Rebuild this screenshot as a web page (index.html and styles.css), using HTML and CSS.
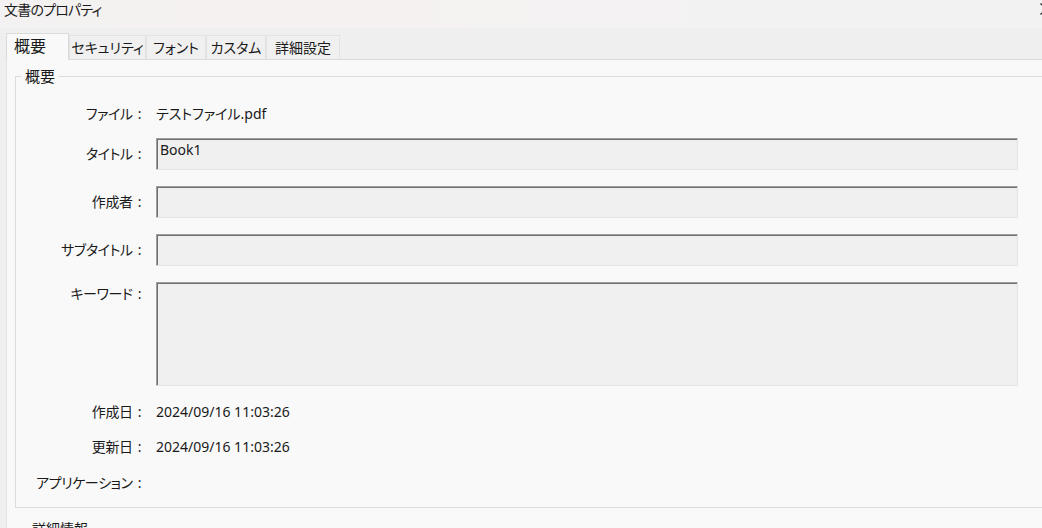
FILE: index.html
```html
<!DOCTYPE html>
<html lang="ja">
<head>
<meta charset="utf-8">
<title>文書のプロパティ</title>
<link rel="stylesheet" href="styles.css">
</head>
<body>
<div class="titlebar">
  <div class="title">文書のプロパティ</div>
  <div class="close">
    <svg width="12" height="12" viewBox="0 0 12 12"><path d="M0.5 0.5 L11.5 11.5 M0.5 11.5 L11.5 0.5" stroke="#1a1a1a" stroke-width="1.2" fill="none"/></svg>
  </div>
</div>
<div class="window">
  <div class="tabs">
    <div class="tab active tab-w1">概要</div>
    <div class="tab tab-w2">セキュリティ</div>
    <div class="tab tab-w3">フォント</div>
    <div class="tab tab-w3">カスタム</div>
    <div class="tab tab-w4">詳細設定</div>
  </div>
  <div class="panel">
    <fieldset class="group">
      <legend class="legend">概要</legend>
      <div class="row row-file">
        <div class="label">ファイル<span class="colon">:</span></div>
        <div class="value">テストファイル.pdf</div>
      </div>
      <div class="row row-first">
        <div class="label">タイトル<span class="colon">:</span></div>
        <div class="field">Book1</div>
      </div>
      <div class="row row-next">
        <div class="label">作成者<span class="colon">:</span></div>
        <div class="field"></div>
      </div>
      <div class="row row-next">
        <div class="label">サブタイトル<span class="colon">:</span></div>
        <div class="field"></div>
      </div>
      <div class="row row-next row-tall">
        <div class="label label-top">キーワード<span class="colon">:</span></div>
        <div class="field field-tall"></div>
      </div>
      <div class="row row-date1">
        <div class="label">作成日<span class="colon">:</span></div>
        <div class="value">2024/09/16 11:03:26</div>
      </div>
      <div class="row row-date2">
        <div class="label">更新日<span class="colon">:</span></div>
        <div class="value">2024/09/16 11:03:26</div>
      </div>
      <div class="row row-date3">
        <div class="label">アプリケーション<span class="colon">:</span></div>
        <div class="value"></div>
      </div>
    </fieldset>
    <div class="next-group">詳細情報</div>
  </div>
</div>
</body>
</html>
```

FILE: styles.css
```css
html, body {
  margin: 0;
  padding: 0;
}
body {
  width: 1042px;
  height: 528px;
  overflow: hidden;
  background: #efefef;
  font-family: "Noto Sans", "Noto Sans CJK JP", sans-serif;
  font-size: 14px;
  color: #1a1a1a;
  font-feature-settings: "palt";
}

.titlebar {
  height: 28px;
  display: flex;
  justify-content: space-between;
  align-items: flex-start;
  background: linear-gradient(90deg, #f3f1f1 0%, #f6f1f1 30%, #f4f2f2 55%, #f2f2f2 100%);
}
.title {
  padding-left: 4px;
  font-size: 14px;
  line-height: 20px;
  letter-spacing: -0.8px;
}
.close {
  width: 2px;
  overflow: visible;
  padding-top: 3px;
}
.close svg {
  display: block;
}

.window {
  padding-top: 5px;
  padding-left: 6px;
}

.tabs {
  display: flex;
  align-items: flex-end;
  height: 26px;
  position: relative;
  z-index: 1;
}
.tab {
  box-sizing: border-box;
  height: 24px;
  border: 1px solid #e2e2e2;
  border-bottom: none;
  background: #f0f0f0;
  display: flex;
  align-items: center;
  justify-content: center;
  font-size: 14px;
  line-height: 20px;
}
.tab.active {
  height: 27px;
  margin-bottom: -1px;
  background: #f9f9f9;
  border-color: #dadada;
  font-size: 16px;
  justify-content: flex-start;
  padding-left: 7px;
  padding-bottom: 3px;
}
.tab-w1 { width: 63px; }
.tab-w2 { width: 77px; }
.tab-w3 { width: 60px; }
.tab-w4 { width: 74px; }

.panel {
  background: #f9f9f9;
  border-top: 1px solid #dadada;
  border-left: 1px solid #e3e3e3;
  padding-left: 8px;
  height: 500px;
}

.group {
  margin: 6px 0 0 0;
  padding: 12px 0 8px 0;
  width: 1040px;
  border: 1px solid #dcdcdc;
  min-inline-size: 0;
}
.legend {
  margin-left: 6px;
  padding: 0 3px;
  font-size: 15px;
  line-height: 20px;
}

.row {
  display: flex;
  align-items: center;
  column-gap: 14px;
  height: 32px;
}
.row-first { margin-top: 8px; }
.row-next { margin-top: 16px; }
.row-tall {
  height: 104px;
  align-items: flex-start;
}
.row-date1 { margin-top: 10px; }
.row-date2 { margin-top: 3px; }
.row-date3 { margin-top: 4px; }

.label {
  width: 126px;
  flex: none;
  text-align: right;
  line-height: 20px;
  letter-spacing: -0.4px;
}
.colon {
  margin-left: 5px;
  margin-right: 1px;
}
.label-top {
  padding-top: 2px;
}
.value {
  line-height: 20px;
}

.field {
  box-sizing: border-box;
  width: 862px;
  height: 32px;
  flex: none;
  background: #f0f0f0;
  border: 1px solid;
  border-color: #a0a0a0 #e3e3e3 #e3e3e3 #a0a0a0;
  box-shadow: inset 1px 1px 0 #6f6f6f;
  padding: 1px 3px;
  line-height: 20px;
}
.field-tall {
  height: 104px;
}

.next-group {
  margin-top: 11px;
  padding-left: 17px;
  line-height: 20px;
}
```
